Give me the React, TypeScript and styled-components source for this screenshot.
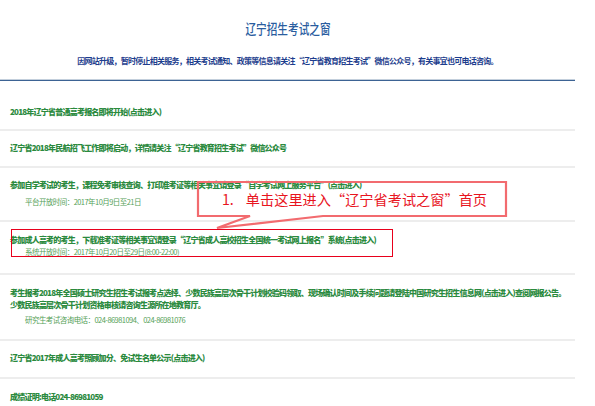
import React from "react";
import styled, { createGlobalStyle } from "styled-components";

const GlobalStyle = createGlobalStyle`
  html, body { margin: 0; padding: 0; background: #ffffff; }
  body { font-family: "Noto Sans CJK SC", "Noto Sans", sans-serif; }
`;

const Page = styled.div`
  position: relative;
  width: 575px;
  background: #ffffff;
`;

const Header = styled.header`
  padding: 20px 0 12px;
  text-align: center;
  border-bottom: 1px solid #c3cfdc;
`;

const Title = styled.h1`
  margin: 0;
  height: 16px;
  line-height: 16px;
  font-size: 14px;
  font-weight: 500;
  color: #2a5d9f;
  span {
    display: inline-block;
    transform: scaleX(0.76);
  }
`;

const Notice = styled.p`
  margin: 19px 0 0;
  line-height: 12px;
  font-size: 8px;
  letter-spacing: -0.75px;
  font-weight: 700;
  color: #1d3d8d;
  white-space: nowrap;
`;

const List = styled.ul`
  list-style: none;
  margin: 0;
  padding: 0;
  border-top: 1px solid #3d6394;
`;

const Row = styled.li<{ $pt: number; $pb: number; $gap: number }>`
  position: relative;
  display: flex;
  flex-direction: column;
  gap: ${(p) => p.$gap}px;
  padding: ${(p) => p.$pt}px 0 ${(p) => p.$pb}px 10px;
  border-bottom: 2px solid #ededed;
`;

const Main = styled.div`
  line-height: 12px;
  font-size: 8px;
  letter-spacing: -0.78px;
  font-weight: 900;
  color: #2b8a3e;
  white-space: nowrap;
`;

const Sub = styled.div<{ $mt?: number }>`
  margin-top: ${(p) => p.$mt ?? 0}px;
  padding-left: 15px;
  line-height: 12px;
  font-size: 7.5px;
  letter-spacing: -0.55px;
  font-weight: 400;
  color: #55a158;
  white-space: nowrap;
`;

const Highlight = styled.div`
  position: absolute;
  left: 11px;
  top: 7px;
  width: 382px;
  height: 28px;
  box-sizing: border-box;
  border: 1.5px solid #e8001c;
  pointer-events: none;
`;

const Callout = styled.div`
  position: absolute;
  left: 197px;
  top: 181px;
  width: 310px;
  height: 36px;
  box-sizing: border-box;
  padding-left: 25px;
  display: flex;
  align-items: center;
  font-size: 14.2px;
  line-height: 18px;
  color: #e8141e;
  white-space: nowrap;
  svg {
    position: absolute;
    left: 0;
    top: 0;
    overflow: visible;
  }
`;

const Step = styled.span`
  position: relative;
  margin-right: 12px;
`;

const CalloutText = styled.span`
  position: relative;
`;

export default function App() {
  return (
    <>
      <GlobalStyle />
      <Page>
        <Header>
          <Title>
            <span>辽宁招生考试之窗</span>
          </Title>
          <Notice>
            因网站升级，暂时停止相关服务，相关考试通知、政策等信息请关注“辽宁省教育招生考试”微信公众号，有关事宜也可电话咨询。
          </Notice>
        </Header>
        <List>
          <Row $pt={25} $pb={11} $gap={0}>
            <Main>2018年辽宁省普通高考报名即将开始(点击进入)</Main>
          </Row>
          <Row $pt={11} $pb={12} $gap={0}>
            <Main>辽宁省2018年民航招飞工作即将启动，详情请关注“辽宁省教育招生考试”微信公众号</Main>
          </Row>
          <Row $pt={11} $pb={12} $gap={5}>
            <Main>参加自学考试的考生，课程免考审核查询、打印准考证等相关事宜请登录“自学考试网上服务平台”(点击进入)</Main>
            <Sub>平台开放时间：2017年10月9日至21日</Sub>
          </Row>
          <Row $pt={12} $pb={15} $gap={0}>
            <Main>参加成人高考的考生，下载准考证等相关事宜请登录“辽宁省成人高校招生全国统一考试网上报名”系统(点击进入)</Main>
            <Sub>系统开放时间：2017年10月20日至29日(8:00-22:00)</Sub>
            <Highlight />
          </Row>
          <Row $pt={12} $pb={13} $gap={0}>
            <Main>考生报考2018年全国硕士研究生招生考试报考点选择、少数民族高层次骨干计划校验码领取、现场确认时间及手续问题请登陆中国研究生招生信息网(点击进入)查阅网报公告。</Main>
            <Main>少数民族高层次骨干计划资格审核请咨询生源所在地教育厅。</Main>
            <Sub $mt={3}>研究生考试咨询电话：024-86981094、024-86981076</Sub>
          </Row>
          <Row $pt={11} $pb={13} $gap={0}>
            <Main>辽宁省2017年成人高考照顾加分、免试生名单公示(点击进入)</Main>
          </Row>
          <Row $pt={12} $pb={12} $gap={0}>
            <Main>成绩证明:电话024-86981059</Main>
          </Row>
        </List>
        <Callout>
          <svg width="310" height="48" viewBox="0 0 310 48" aria-hidden="true">
            <path
              d="M1 1 H309 V35 H126 L20 47 L53 35 H1 Z"
              fill="none"
              stroke="#f26b6f"
              strokeWidth="2.2"
              strokeLinejoin="miter"
            />
          </svg>
          <Step>1.</Step>
          <CalloutText>单击这里进入“辽宁省考试之窗”首页</CalloutText>
        </Callout>
      </Page>
    </>
  );
}
